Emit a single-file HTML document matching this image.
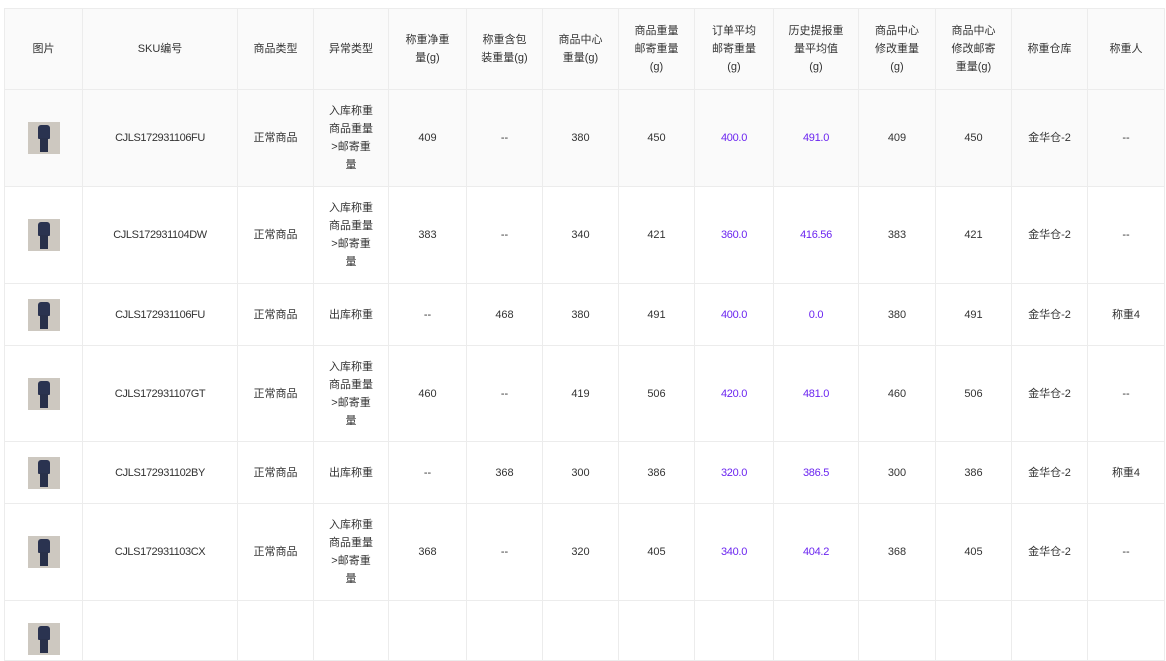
<!DOCTYPE html>
<html><head><meta charset="utf-8"><style>
*{box-sizing:border-box;margin:0;padding:0}
body{width:1166px;height:631px;overflow:hidden;background:#fff;font-family:"Liberation Sans","Noto Sans CJK SC",sans-serif;font-size:11px;color:#333}
table{position:absolute;left:4px;top:8px;border-collapse:collapse;table-layout:fixed;width:1160px}
td,th{border:1px solid #ececec;text-align:center;vertical-align:middle;font-weight:normal;line-height:18px;padding:0 6px}
.n{letter-spacing:-0.4px}
th{background:#fafafa;height:81px}
tr.h td{background:#fafafa}
.p{color:#6b25f0;letter-spacing:-0.3px}
.img{width:32px;height:32px;margin:0 auto;background:#cdc8c0;position:relative;overflow:hidden}
.img:before{content:"";position:absolute;left:10px;top:3px;width:12px;height:14px;background:#2a3350;border-radius:3px 3px 1px 1px}
.img:after{content:"";position:absolute;left:12px;top:16px;width:8px;height:14px;background:#28304a}
</style></head><body>
<table>
<colgroup><col style="width:78px"><col style="width:155px"><col style="width:76px"><col style="width:75px"><col style="width:78px"><col style="width:76px"><col style="width:76px"><col style="width:76px"><col style="width:79px"><col style="width:85px"><col style="width:77px"><col style="width:76px"><col style="width:76px"><col style="width:77px"></colgroup>
<tr><th>图片</th><th>SKU编号</th><th>商品类型</th><th>异常类型</th><th>称重净重<br>量(g)</th><th>称重含包<br>装重量(g)</th><th>商品中心<br>重量(g)</th><th>商品重量<br>邮寄重量<br>(g)</th><th>订单平均<br>邮寄重量<br>(g)</th><th>历史提报重<br>量平均值<br>(g)</th><th>商品中心<br>修改重量<br>(g)</th><th>商品中心<br>修改邮寄<br>重量(g)</th><th>称重仓库</th><th>称重人</th></tr>
<tr class="h" style="height:97px"><td><div class="img"></div></td><td class="n">CJLS172931106FU</td><td>正常商品</td><td>入库称重<br>商品重量<br>&gt;邮寄重<br>量</td><td>409</td><td>--</td><td>380</td><td>450</td><td class="p">400.0</td><td class="p">491.0</td><td>409</td><td>450</td><td>金华仓-2</td><td>--</td></tr>
<tr style="height:97px"><td><div class="img"></div></td><td class="n">CJLS172931104DW</td><td>正常商品</td><td>入库称重<br>商品重量<br>&gt;邮寄重<br>量</td><td>383</td><td>--</td><td>340</td><td>421</td><td class="p">360.0</td><td class="p">416.56</td><td>383</td><td>421</td><td>金华仓-2</td><td>--</td></tr>
<tr style="height:62px"><td><div class="img"></div></td><td class="n">CJLS172931106FU</td><td>正常商品</td><td>出库称重</td><td>--</td><td>468</td><td>380</td><td>491</td><td class="p">400.0</td><td class="p">0.0</td><td>380</td><td>491</td><td>金华仓-2</td><td>称重4</td></tr>
<tr style="height:96px"><td><div class="img"></div></td><td class="n">CJLS172931107GT</td><td>正常商品</td><td>入库称重<br>商品重量<br>&gt;邮寄重<br>量</td><td>460</td><td>--</td><td>419</td><td>506</td><td class="p">420.0</td><td class="p">481.0</td><td>460</td><td>506</td><td>金华仓-2</td><td>--</td></tr>
<tr style="height:62px"><td><div class="img"></div></td><td class="n">CJLS172931102BY</td><td>正常商品</td><td>出库称重</td><td>--</td><td>368</td><td>300</td><td>386</td><td class="p">320.0</td><td class="p">386.5</td><td>300</td><td>386</td><td>金华仓-2</td><td>称重4</td></tr>
<tr style="height:97px"><td><div class="img"></div></td><td class="n">CJLS172931103CX</td><td>正常商品</td><td>入库称重<br>商品重量<br>&gt;邮寄重<br>量</td><td>368</td><td>--</td><td>320</td><td>405</td><td class="p">340.0</td><td class="p">404.2</td><td>368</td><td>405</td><td>金华仓-2</td><td>--</td></tr>
<tr style="height:60px"><td style="vertical-align:top;padding-top:22px"><div class="img"></div></td><td></td><td></td><td></td><td></td><td></td><td></td><td></td><td></td><td></td><td></td><td></td><td></td><td></td></tr>
</table>
</body></html>
